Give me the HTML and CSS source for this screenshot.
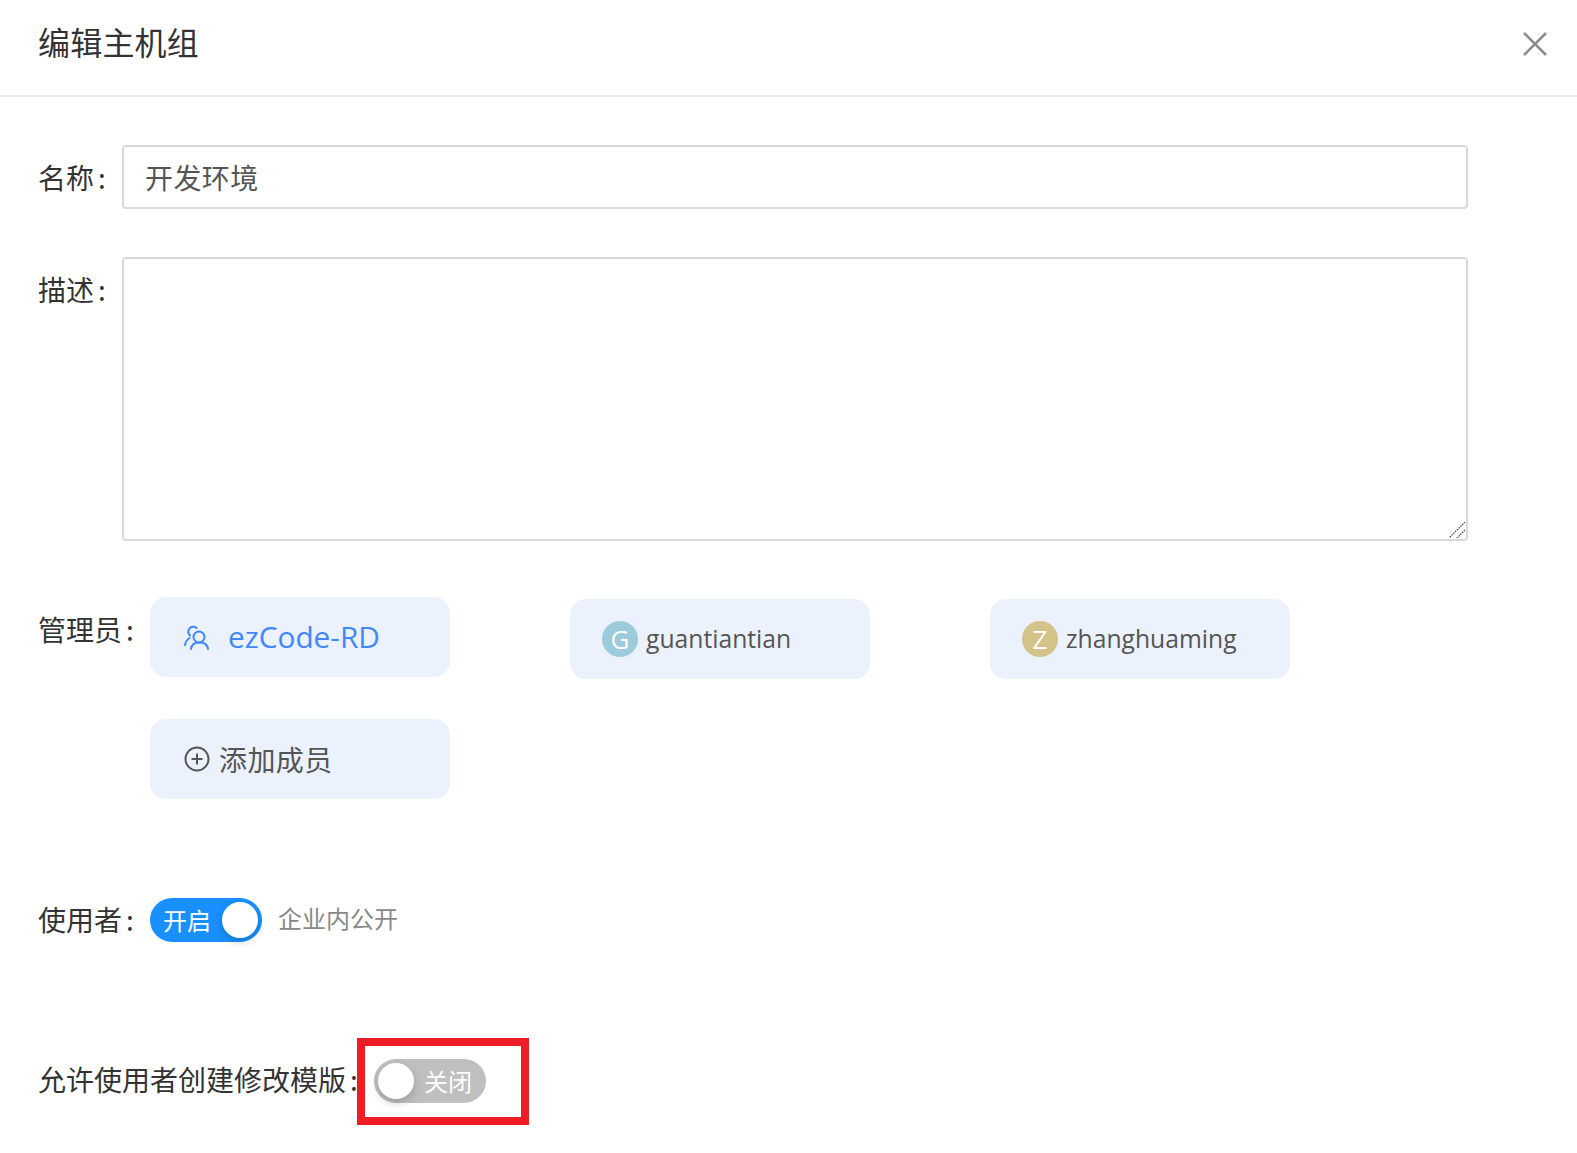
FILE: index.html
```html
<!DOCTYPE html>
<html lang="zh-CN">
<head>
<meta charset="utf-8">
<title>编辑主机组</title>
<link rel="stylesheet" href="styles.css">
</head>
<body>
<div class="modal">
  <header class="modal-header">
    <h1 class="modal-title">编辑主机组</h1>
    <button class="close" type="button" aria-label="关闭">
      <svg width="24" height="24" viewBox="0 0 24 24"><path d="M1 1 23 23M23 1 1 23" fill="none" stroke="#8c8c8c" stroke-width="2.500"/></svg>
    </button>
  </header>
  <form class="form">
    <div class="row row-name">
      <label class="label label-short">名称<span class="colon">:</span></label>
      <input class="field input" type="text" value="开发环境">
    </div>
    <div class="row row-desc">
      <label class="label label-short label-top">描述<span class="colon">:</span></label>
      <div class="textarea-wrap">
        <textarea class="field textarea"></textarea>
        <svg class="grip" width="16" height="16" viewBox="0 0 16 16" fill="none" stroke="#333" stroke-width="1.200" stroke-dasharray="1.500 1"><path d="M16 0 0 16M16 8 8 16"/></svg>
      </div>
    </div>
    <div class="row row-admin">
      <label class="label label-mid label-admin">管理员<span class="colon">:</span></label>
      <div class="tags">
        <div class="tag tag-group">
          <svg class="tag-icon" width="26" height="26" viewBox="0 0 26 26" fill="none" stroke="#4088fb" stroke-width="2" stroke-linecap="round"><circle cx="15" cy="13" r="5.500"/><path d="M7 25C7.500 20.500 11 18.500 15.500 18.500S23.500 20.500 24 25"/><path d="M12.500 4A5 5 0 1 0 6 11.600M5.500 14C3 15.500 1.500 18 1 21"/></svg>
          <span class="tag-group-name">ezCode-RD</span>
        </div>
        <div class="tag tag-user">
          <span class="avatar avatar-g">G</span>
          <span class="tag-user-name">guantiantian</span>
        </div>
        <div class="tag tag-user">
          <span class="avatar avatar-z">Z</span>
          <span class="tag-user-name">zhanghuaming</span>
        </div>
        <div class="tag tag-add">
          <svg class="add-icon" width="26" height="26" viewBox="0 0 26 26" fill="none" stroke="#555" stroke-width="2"><circle cx="13" cy="13" r="11.500"/><path d="M13 7.500v11M7.500 13h11"/></svg>
          <span class="add-text">添加成员</span>
        </div>
      </div>
    </div>
    <div class="row row-user">
      <label class="label label-mid label-lift">使用者<span class="colon">:</span></label>
      <div class="switch switch-on"><span class="switch-text">开启</span><span class="knob"></span></div>
      <span class="hint">企业内公开</span>
    </div>
    <div class="row row-template">
      <label class="label label-long label-lift-more">允许使用者创建修改模版<span class="colon">:</span></label>
      <div class="switch-wrap">
        <div class="switch switch-off"><span class="knob"></span><span class="switch-text">关闭</span></div>
        <div class="annotation"></div>
      </div>
    </div>
  </form>
</div>
</body>
</html>
```
FILE: styles.css
```css
* { box-sizing: border-box; }
html, body { margin: 0; padding: 0; background: #fff; }
body {
  font-family: "Open Sans", "Noto Sans CJK SC", sans-serif;
  color: #333;
  height: 1153px;
  overflow: hidden;
}
.modal-header {
  height: 97px;
  border-bottom: 2px solid #e8e8e8;
  padding: 0 30px 9px 38px;
  display: flex;
  align-items: center;
  justify-content: space-between;
}
.modal-title {
  margin: 0 0 4px;
  font-family: "Noto Sans CJK SC", sans-serif;
  font-size: 32px;
  font-weight: 400;
  line-height: 44px;
  letter-spacing: .2px;
  color: #333;
}
.close {
  border: 0;
  background: none;
  padding: 0;
  margin-top: 1px;
  width: 24px;
  height: 24px;
  display: block;
  line-height: 0;
}
.form { padding: 48px 0 0 38px; }
.row { display: flex; }
.row-name { align-items: center; }
.row-desc { margin-top: 48px; }
.row-admin { margin-top: 56px; }
.row-user { margin-top: 99px; align-items: center; }
.row-template { margin-top: 117px; align-items: center; }
.label {
  font-family: "Noto Sans CJK SC", sans-serif;
  font-size: 28px;
  line-height: 40px;
  color: #333;
  flex: none;
}
.colon { margin-left: 4px; }
.label-short { width: 84px; }
.label-mid { width: 112px; }
.label-long { width: 336px; }
.label-top { padding-top: 12px; }
.label-admin { padding-top: 12px; }
.label-lift { padding-bottom: 3px; }
.label-lift-more { padding-bottom: 4px; }
.field {
  display: block;
  width: 1346px;
  border: 2px solid #d9d9d9;
  border-radius: 4px;
  background: #fff;
  outline: 0;
  margin: 0;
  font-family: "Noto Sans CJK SC", sans-serif;
  font-size: 28px;
  color: #555;
}
.input { height: 64px; padding: 0 21px; letter-spacing: .4px; }
.textarea { height: 284px; padding: 8px 22px; resize: none; }
.textarea-wrap { position: relative; width: 1346px; }
.grip { position: absolute; right: 3px; bottom: 3px; }
.tags {
  display: grid;
  grid-template-columns: repeat(3, 300px);
  column-gap: 120px;
  row-gap: 42px;
}
.tag {
  height: 80px;
  border-radius: 16px;
  background: #ebf1fd;
  display: flex;
  align-items: center;
  padding-left: 34px;
}
.tag-user { margin-top: 2px; margin-bottom: -2px; padding-left: 32px; }
.tag-icon { flex: none; margin-right: 18px; }
.tag-group-name { font-size: 29.800px; color: #4088fb; padding-bottom: 2px; }
.avatar {
  width: 36px;
  height: 36px;
  border-radius: 50%;
  color: #fff;
  font-size: 26px;
  line-height: 36px;
  text-align: center;
  flex: none;
  margin-right: 8px;
}
.avatar-g { background: #9ccbdc; }
.avatar-z { background: #d4c388; }
.tag-user-name { font-size: 24.700px; color: #555; padding-bottom: 2px; }
.add-icon { flex: none; margin-right: 9px; }
.add-text { font-family: "Noto Sans CJK SC", sans-serif; font-size: 28px; letter-spacing: .4px; color: #555; }
.switch {
  width: 112px;
  height: 44px;
  border-radius: 22px;
  display: flex;
  align-items: center;
  flex: none;
  font-family: "Noto Sans CJK SC", sans-serif;
  font-size: 24px;
  color: #fff;
}
.switch-on { background: #1890ff; padding: 0 4px 0 13px; justify-content: space-between; }
.switch-off { background: #bfbfbf; padding: 0 14px 0 4px; justify-content: space-between; }
.switch-text { line-height: 36px; }
.knob {
  width: 36px;
  height: 36px;
  border-radius: 50%;
  background: #fff;
  box-shadow: 0 4px 8px rgba(0, 35, 11, .2);
  flex: none;
}
.hint {
  margin-left: 16px;
  margin-bottom: 5px;
  font-family: "Noto Sans CJK SC", sans-serif;
  font-size: 24px;
  color: #888;
}
.switch-wrap { position: relative; }
.annotation {
  position: absolute;
  left: -17px;
  top: -21px;
  width: 172px;
  height: 87px;
  border: 8px solid #ee1c25;
}
```
